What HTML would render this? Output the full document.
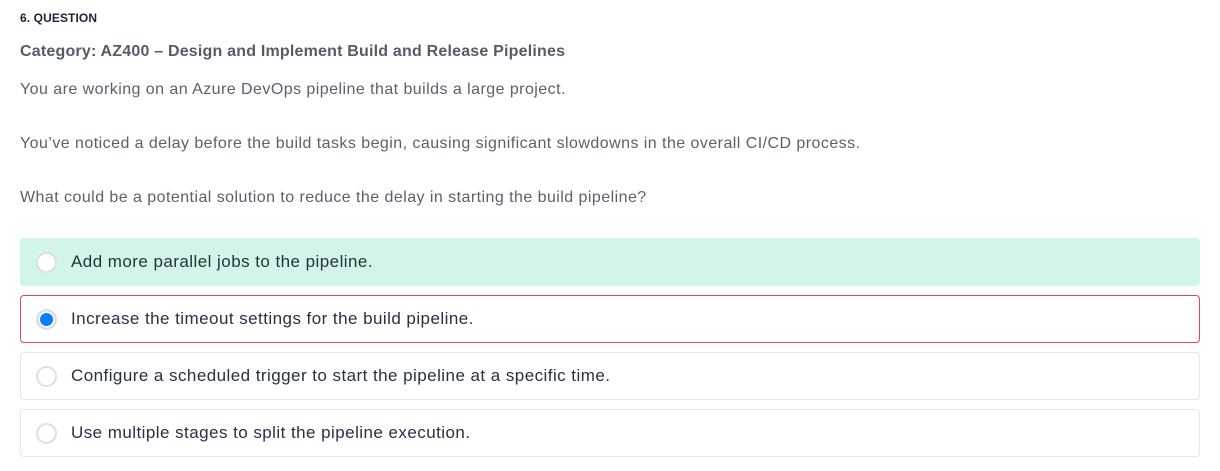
<html><head><style>
body{margin:0;background:#fff;font-family:"Liberation Sans",sans-serif;width:1220px;height:471px;overflow:hidden;position:relative}
.t{position:absolute;left:20px;white-space:nowrap}
.h{top:11px;font-size:12px;font-weight:bold;color:#1c2434;letter-spacing:.1px}
.c{top:43px;font-size:16px;font-weight:bold;color:#555c66;letter-spacing:.2px}
.p{font-size:16px;color:#5a616b;letter-spacing:.45px}
.o{position:absolute;left:20px;width:1178px;height:47px;border:1px solid #e3e6ea;border-radius:4px;box-sizing:border-box}
.o span{position:absolute;left:50px;top:13px;font-size:17px;color:#273142;letter-spacing:.45px}
.r{position:absolute;left:15px;top:13px;width:21px;height:21px;border-radius:50%;border:2px solid #dcdfe6;background:#fff;box-sizing:border-box}
</style></head><body>
<div class="t h">6. QUESTION</div>
<div class="t c">Category: AZ400 – Design and Implement Build and Release Pipelines</div>
<div class="t p" style="top:81px">You are working on an Azure DevOps pipeline that builds a large project.</div>
<div class="t p" style="top:135px">You’ve noticed a delay before the build tasks begin, causing significant slowdowns in the overall CI/CD process.</div>
<div class="t p" style="top:189px">What could be a potential solution to reduce the delay in starting the build pipeline?</div>
<div class="o" style="top:238px;width:1180px;height:48px;background:#d1f5e7;border-color:#d1f5e7"><div class="r"></div><span>Add more parallel jobs to the pipeline.</span></div>
<div class="o" style="top:295px;width:1180px;height:48px;border-color:#e0474f"><div class="r" style="background:#0a7cff;box-shadow:inset 0 0 0 2px #fff"></div><span>Increase the timeout settings for the build pipeline.</span></div>
<div class="o" style="top:352px;width:1180px;height:48px"><div class="r"></div><span>Configure a scheduled trigger to start the pipeline at a specific time.</span></div>
<div class="o" style="top:409px;width:1180px;height:48px"><div class="r"></div><span>Use multiple stages to split the pipeline execution.</span></div>
</body></html>
